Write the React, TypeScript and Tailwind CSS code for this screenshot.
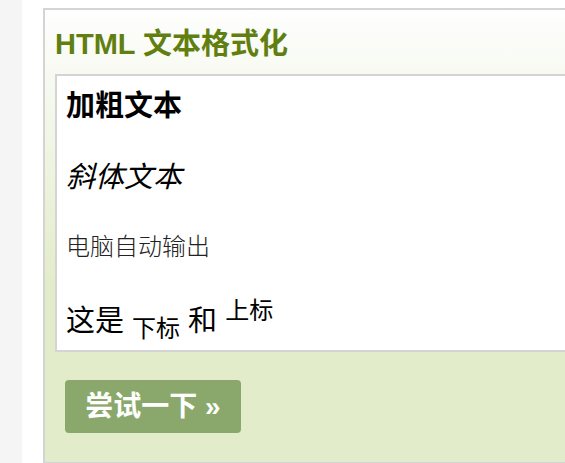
export default function App() {
  return (
    <div className="flex h-[463px] w-[565px] overflow-hidden bg-white font-['Liberation_Sans','Noto_Sans_CJK_SC',sans-serif]">
      <div className="w-[22px] shrink-0 bg-[#f5f5f5]" />

      <div className="shrink-0 pl-[21px] pt-[8px]">
        <div className="w-[720px] border-2 border-[#d4d4d4] bg-linear-to-b from-[#fefefe] to-[#e3ecca] to-60% px-[10px] pb-[29px]">
          <h2 className="h-[64px] pt-[17px] text-[29px] leading-[34px] font-bold text-[#617f10]">
            HTML 文本格式化
          </h2>

          <div className="h-[278px] border-2 border-[#d4d4d4] bg-white pl-[9px] pt-[13px] text-black">
            <div className="h-[71px] text-[29px] leading-[35px] font-bold">加粗文本</div>
            <div className="h-[71px] text-[29px] leading-[35px] italic">斜体文本</div>
            <div className="h-[73px] font-['Liberation_Mono','Noto_Sans_CJK_SC',monospace] text-[24px] leading-[35px] font-light text-[#222]">
              电脑自动输出
            </div>
            <div className="text-[29px] leading-[35px]">
              这是 <sub className="text-[24px]">下标</sub> 和 <sup className="text-[24px]">上标</sup>
            </div>
          </div>

          <button className="mt-[28px] ml-[10px] flex h-[53px] w-[176px] items-center justify-center rounded-[4px] bg-[#8aa86b] text-[28px] leading-none font-bold text-white">
            尝试一下 »
          </button>
        </div>
      </div>
    </div>
  )
}
